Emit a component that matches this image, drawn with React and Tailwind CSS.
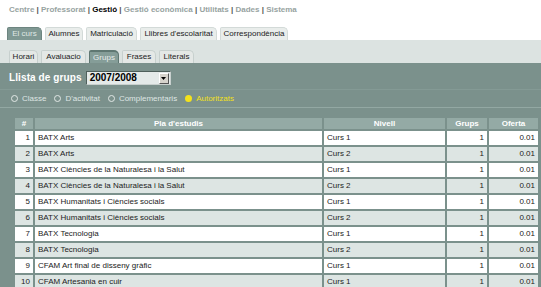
import React from "react";

const navItems = [
  { label: "Centre" },
  { label: "Professorat" },
  { label: "Gestió", active: true },
  { label: "Gestió econòmica" },
  { label: "Utilitats" },
  { label: "Dades" },
  { label: "Sistema" },
];

const mainTabs = [
  { label: "El curs", w: "w-[35px]", active: true },
  { label: "Alumnes", w: "w-[38px]" },
  { label: "Matriculació", w: "w-[51px]" },
  { label: "Llibres d'escolaritat", w: "w-[77px]" },
  { label: "Correspondència", w: "w-[68px]" },
];

const subTabs = [
  { label: "Horari", w: "w-[29px]" },
  { label: "Avaluacio", w: "w-[45px]" },
  { label: "Grups", w: "w-[30px]", active: true },
  { label: "Frases", w: "w-[34px]" },
  { label: "Literals", w: "w-[35px]" },
];

const filters = [
  { label: "Classe" },
  { label: "D'activitat" },
  { label: "Complementaris" },
  { label: "Autoritzats", checked: true },
];

const rows = [
  { id: 1, pla: "BATX Arts", nivell: "Curs 1" },
  { id: 2, pla: "BATX Arts", nivell: "Curs 2" },
  { id: 3, pla: "BATX Ciències de la Naturalesa i la Salut", nivell: "Curs 1" },
  { id: 4, pla: "BATX Ciències de la Naturalesa i la Salut", nivell: "Curs 2" },
  { id: 5, pla: "BATX Humanitats i Ciències socials", nivell: "Curs 1" },
  { id: 6, pla: "BATX Humanitats i Ciències socials", nivell: "Curs 2" },
  { id: 7, pla: "BATX Tecnologia", nivell: "Curs 1" },
  { id: 8, pla: "BATX Tecnologia", nivell: "Curs 2" },
  { id: 9, pla: "CFAM Art final de disseny gràfic", nivell: "Curs 1" },
  { id: 10, pla: "CFAM Artesania en cuir", nivell: "Curs 1" },
];

export default function App() {
  return (
    <div className="w-[541px] h-[287px] overflow-hidden bg-[#7b918c] font-['Liberation_Sans',Arial,sans-serif] text-[8px] leading-none">
      {/* Top nav */}
      <div className="bg-white h-[27px] pl-[9px] pt-[6px] text-[8px] font-bold text-[#97a3a1] whitespace-nowrap">
        {navItems.map((item, i) => (
          <span key={item.label}>
            {i > 0 && <span className="text-[#555]"> | </span>}
            <span className={item.active ? "text-black" : ""}>{item.label}</span>
          </span>
        ))}
      </div>

      {/* Main tabs */}
      <div className="bg-white h-[13px] flex items-end gap-[3px] pl-[7px]">
        {mainTabs.map((t) => (
          <div
            key={t.label}
            className={`${t.w} h-[13px] flex items-center justify-center rounded-tl-[2px] rounded-tr-[5px] border border-b-0 ${
              t.active
                ? "bg-[#7f9893] border-[#6d8580] text-[#dfe7e5]"
                : "bg-[#e9edeb] border-[#d3dad8] text-[#222]"
            }`}
          >
            {t.label}
          </div>
        ))}
      </div>

      {/* Sub tabs */}
      <div className="bg-[#dce3e1] h-[23px] flex items-end gap-[3px] pl-[9px]">
        {subTabs.map((t) => (
          <div
            key={t.label}
            className={`${t.w} h-[13px] flex items-center justify-center rounded-tl-[2px] rounded-tr-[5px] border border-b-0 ${
              t.active
                ? "bg-[#859d98] border-[#5f7772] border-t-2 text-[#e6eceb]"
                : "bg-[#e4e8e6] border-[#c7d0ce] text-[#222]"
            }`}
          >
            {t.label}
          </div>
        ))}
      </div>

      {/* Header */}
      <div className="h-[26px] flex items-center pl-[9px] pt-[4px]">
        <span className="text-[10px] font-bold text-white tracking-[0.1px]">Llista de grups</span>
        <div className="ml-[4px] w-[85px] h-[14px] flex items-center bg-[#e4eae9] border border-t-[#4e5f5b] border-l-[#4e5f5b] border-r-[#c8d0ce] border-b-[#c8d0ce]">
          <span className="flex-1 pl-[3px] text-[10px] font-bold text-black">2007/2008</span>
          <div className="w-[10px] h-[11px] mr-[1px] bg-[#d6d3cc] border border-t-white border-l-white border-r-[#555] border-b-[#555] flex items-center justify-center">
            <svg width="5" height="3" viewBox="0 0 5 3">
              <path d="M0 0h5L2.5 3z" fill="#000" />
            </svg>
          </div>
        </div>
      </div>

      {/* Filters */}
      <div className="h-[19px] flex items-center gap-[8px] pl-[11px] border-t border-[#849a95] border-b border-b-[#93a8a3] text-[#dfe6e4]">
        {filters.map((f) => (
          <div key={f.label} className="flex items-center gap-[4px]">
            {f.checked ? (
              <span className="w-[7px] h-[7px] rounded-full bg-[#f4e21c]" />
            ) : (
              <span className="w-[7px] h-[7px] rounded-full border border-[#e2e8e6]" />
            )}
            <span className={f.checked ? "text-[#f2e01a]" : ""}>{f.label}</span>
          </div>
        ))}
      </div>

      {/* Table */}
      <div className="pl-[13px] pt-[8px]">
        <table className="w-[527px] border-separate border-spacing-[2px] text-[#222]">
          <thead>
            <tr className="h-[11px] bg-[#94aaa5] text-white font-bold">
              <th className="w-[18px] p-0 text-center font-bold">#</th>
              <th className="w-[287px] p-0 text-center font-bold">Pla d'estudis</th>
              <th className="w-[121px] p-0 text-center font-bold">Nivell</th>
              <th className="w-[40px] p-0 text-center font-bold">Grups</th>
              <th className="p-0 text-center font-bold">Oferta</th>
            </tr>
          </thead>
          <tbody>
            {rows.map((r, i) => (
              <tr key={r.id} className={`h-[14px] ${i % 2 === 0 ? "bg-white" : "bg-[#dde5e3]"}`}>
                <td className="p-0 pr-[3px] text-right">{r.id}</td>
                <td className="p-0 pl-[3px]">{r.pla}</td>
                <td className="p-0 pl-[3px]">{r.nivell}</td>
                <td className="p-0 pr-[3px] text-right">1</td>
                <td className="p-0 pr-[3px] text-right">0.01</td>
              </tr>
            ))}
          </tbody>
        </table>
      </div>
    </div>
  );
}
